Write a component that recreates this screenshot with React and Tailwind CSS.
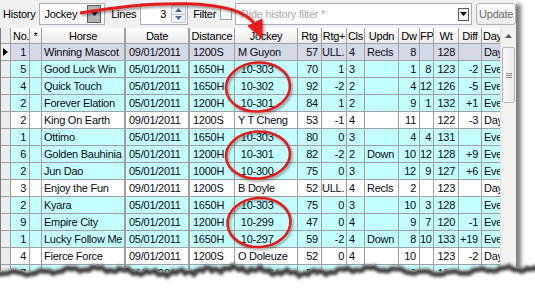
import React from 'react';

const ROWS = [
  { t: 'sel', no: '1', horse: 'Winning Mascot', date: '09/01/2011', dist: '1200S', jockey: 'M Guyon', rtg: '57', rtgp: 'ULL.', cls: '4', updn: 'Recls', dw: '8', fp: '', wt: '128', diff: '', day: 'Day' },
  { t: 'cyan', no: '5', horse: 'Good Luck Win', date: '05/01/2011', dist: '1650H', jockey: ' 10-303', rtg: '70', rtgp: '1', cls: '3', updn: '', dw: '1', fp: '8', wt: '123', diff: '-2', day: 'Eve' },
  { t: 'cyan', no: '4', horse: 'Quick Touch', date: '05/01/2011', dist: '1650H', jockey: ' 10-302', rtg: '92', rtgp: '-2', cls: '2', updn: '', dw: '4', fp: '12', wt: '126', diff: '-5', day: 'Eve' },
  { t: 'cyan', no: '2', horse: 'Forever Elation', date: '05/01/2011', dist: '1200H', jockey: ' 10-301', rtg: '84', rtgp: '1', cls: '2', updn: '', dw: '9', fp: '1', wt: '132', diff: '+1', day: 'Eve' },
  { t: 'white', no: '2', horse: 'King On Earth', date: '09/01/2011', dist: '1200S', jockey: 'Y T Cheng', rtg: '53', rtgp: '-1', cls: '4', updn: '', dw: '11', fp: '', wt: '122', diff: '-3', day: 'Day' },
  { t: 'cyan', no: '1', horse: 'Ottimo', date: '05/01/2011', dist: '1650H', jockey: ' 10-303', rtg: '80', rtgp: '0', cls: '3', updn: '', dw: '4', fp: '4', wt: '131', diff: '', day: 'Eve' },
  { t: 'cyan', no: '6', horse: 'Golden Bauhinia', date: '05/01/2011', dist: '1200H', jockey: ' 10-301', rtg: '82', rtgp: '-2', cls: '2', updn: 'Down', dw: '10', fp: '12', wt: '128', diff: '+9', day: 'Eve' },
  { t: 'cyan', no: '2', horse: 'Jun Dao', date: '05/01/2011', dist: '1000H', jockey: ' 10-300', rtg: '75', rtgp: '0', cls: '3', updn: '', dw: '12', fp: '9', wt: '127', diff: '+6', day: 'Eve' },
  { t: 'white', no: '3', horse: 'Enjoy the Fun', date: '09/01/2011', dist: '1200S', jockey: 'B Doyle', rtg: '52', rtgp: 'ULL.', cls: '4', updn: 'Recls', dw: '2', fp: '', wt: '123', diff: '', day: 'Day' },
  { t: 'cyan', no: '2', horse: 'Kyara', date: '05/01/2011', dist: '1650H', jockey: ' 10-303', rtg: '75', rtgp: '0', cls: '3', updn: '', dw: '10', fp: '3', wt: '128', diff: '', day: 'Eve' },
  { t: 'cyan', no: '9', horse: 'Empire City', date: '05/01/2011', dist: '1200H', jockey: ' 10-299', rtg: '47', rtgp: '0', cls: '4', updn: '', dw: '9', fp: '7', wt: '120', diff: '-1', day: 'Eve' },
  { t: 'cyan', no: '1', horse: 'Lucky Follow Me', date: '05/01/2011', dist: '1650H', jockey: ' 10-297', rtg: '59', rtgp: '-2', cls: '4', updn: 'Down', dw: '8', fp: '10', wt: '133', diff: '+19', day: 'Eve' },
  { t: 'white', no: '4', horse: 'Fierce Force', date: '09/01/2011', dist: '1200S', jockey: 'O Doleuze', rtg: '52', rtgp: '0', cls: '4', updn: '', dw: '10', fp: '', wt: '123', diff: '-2', day: 'Day' },
  { t: 'cyan', no: '7', horse: 'Sunny Way', date: '05/01/2011', dist: '1650H', jockey: ' 10-296', rtg: '58', rtgp: '0', cls: '4', updn: '', dw: '9', fp: '', wt: '126', diff: '', day: 'Eve' },
];

const COLS = [
  { k: 'no', label: 'No.', cell: 'text-right pr-[3px]', head: 'text-left pl-[2px]' },
  { k: 'star', label: '*', cell: '', head: 'text-center' },
  { k: 'horse', label: 'Horse', cell: 'pl-[2px] border-r-2', head: 'text-center border-r-2' },
  { k: 'date', label: 'Date', cell: 'pl-[3px] border-r-2', head: 'text-center border-r-2' },
  { k: 'dist', label: 'Distance', cell: 'pl-[3px]', head: 'text-center' },
  { k: 'jockey', label: 'Jockey', cell: 'pl-[3px]', head: 'text-center' },
  { k: 'rtg', label: 'Rtg', cell: 'text-right pr-[3px]', head: 'text-center' },
  { k: 'rtgp', label: 'Rtg+', cell: 'text-right pr-[2px]', head: 'text-center' },
  { k: 'cls', label: 'Cls', cell: 'pl-[2px]', head: 'text-center' },
  { k: 'updn', label: 'Updn', cell: 'pl-[2px]', head: 'text-center' },
  { k: 'dw', label: 'Dw', cell: 'text-right pr-[3px]', head: 'text-center' },
  { k: 'fp', label: 'FP', cell: 'text-right pr-[2px]', head: 'text-center' },
  { k: 'wt', label: 'Wt', cell: 'text-right pr-[3px]', head: 'text-center' },
  { k: 'diff', label: 'Diff', cell: 'text-right pr-[3px]', head: 'text-center' },
  { k: 'day', label: 'Day', cell: 'pl-[2px]', head: 'text-left pl-[1px]' },
];

const ROW_BG = { sel: 'bg-[#d5d9e7]', cyan: 'bg-[#c4ffff]', white: 'bg-white' };

const GRID = 'grid grid-cols-[10px_19px_12px_84px_64px_45px_63px_24px_25px_18px_34px_21px_14px_25px_23px_19px]';
const CELL = 'border-r border-b border-[#a0a0a0] overflow-hidden whitespace-pre leading-[16px]';

function DownArrow() {
  return (
    <svg width="7" height="4" viewBox="0 0 7 4">
      <path d="M0 0h7L3.5 4z" fill="#000" />
    </svg>
  );
}

function Toolbar() {
  return (
    <div className="h-[28px] flex items-center text-black">
      <span className="ml-[3px]">History</span>
      <div className="ml-[4px] w-[66px] h-[22px] border border-[#a9b0b8] bg-white flex items-center justify-between">
        <span className="pl-[4px]">Jockey</span>
        <div className="mr-[3px] w-[14px] h-[18px] bg-[#b4b4b4] border border-[#5c5c5c] flex items-center justify-center">
          <DownArrow />
        </div>
      </div>
      <span className="ml-[6px]">Lines</span>
      <div className="ml-[4px] w-[48px] h-[22px] border border-[#a9b0b8] bg-white flex items-center justify-end">
        <span className="mr-[5px]">3</span>
        <div className="mr-[1px] w-[15px] h-[18px] flex flex-col">
          <div className="flex-1 border border-[#b8c4d4] bg-[#eef2f8] flex items-center justify-center rounded-t-[2px]">
            <svg width="7" height="4" viewBox="0 0 7 4"><path d="M0 4h7L3.5 0z" fill="#4d6a92" /></svg>
          </div>
          <div className="flex-1 border border-t-0 border-[#b8c4d4] bg-[#eef2f8] flex items-center justify-center rounded-b-[2px]">
            <svg width="7" height="4" viewBox="0 0 7 4"><path d="M0 0h7L3.5 4z" fill="#4d6a92" /></svg>
          </div>
        </div>
      </div>
      <span className="ml-[5px]">Filter</span>
      <div className="ml-[4px] w-[12px] h-[12px] border border-[#9aa2ac] bg-white" />
      <div className="ml-[3px] w-[238px] h-[22px] border border-[#a9b0b8] bg-white flex items-center justify-between">
        <span className="pl-[5px] text-[#a8a8a8]">Ride history filter *</span>
        <div className="mr-[2px] w-[11px] h-[13px] border border-[#5c5c5c] bg-[#f4f4f4] flex items-center justify-center">
          <DownArrow />
        </div>
      </div>
      <div className="ml-[4px] w-[40px] h-[22px] border border-[#b2b2b2] rounded-[3px] bg-gradient-to-b from-[#fbfbfb] to-[#ececec] flex items-center justify-center text-[#6d6d6d]">
        Update
      </div>
    </div>
  );
}

function Scrollbar() {
  return (
    <div className="w-[16px] flex flex-col bg-[#f2f2ef] border-l border-[#e0e0e0]">
      <div className="h-[16px] flex items-center justify-center">
        <svg width="7" height="4" viewBox="0 0 7 4"><path d="M0 4h7L3.5 0z" fill="#555" /></svg>
      </div>
      <div className="mt-[3px] mx-[1px] h-[56px] rounded-[2px] border border-[#b5b5b5] bg-gradient-to-r from-[#f8f8f8] to-[#ebebeb] flex flex-col items-center justify-center gap-[1px]">
        <div className="w-[6px] h-[1px] bg-[#8a8a8a]" />
        <div className="w-[6px] h-[1px] bg-[#8a8a8a]" />
        <div className="w-[6px] h-[1px] bg-[#8a8a8a]" />
      </div>
    </div>
  );
}

function Grid() {
  return (
    <div className="w-[500px] flex flex-col border-l border-[#7c7c7c] bg-white">
      <div className={`${GRID} h-[16px]`}>
        <div className="border-r border-b border-[#a0a0a0] bg-[#ececec]" />
        {COLS.map((c) => (
          <div key={c.k} className={`${CELL} ${c.head} leading-[15px] bg-gradient-to-b from-[#fdfdfd] to-[#ececec]`}>
            {c.label}
          </div>
        ))}
      </div>
      {ROWS.map((r, i) => (
        <div key={i} className={`${GRID} h-[17px] text-[#0a0a14]`}>
          <div className="border-r border-b border-[#a0a0a0] bg-[#ececec] flex items-center pl-[2px]">
            {i === 0 && (
              <svg width="5" height="8" viewBox="0 0 5 8"><path d="M0 0l5 4-5 4z" fill="#000" /></svg>
            )}
          </div>
          {COLS.map((c) => (
            <div key={c.k} className={`${CELL} ${c.cell} ${ROW_BG[r.t]}`}>
              {c.k === 'star' ? '' : r[c.k]}
            </div>
          ))}
        </div>
      ))}
    </div>
  );
}

function tornEdge() {
  const pts = [];
  for (let x = -4; x <= 540; x += 3) {
    const y =
      268 +
      2.2 * Math.sin(x * 0.045 + 0.6) +
      1.6 * Math.sin(x * 0.23 + 1.3) +
      1.1 * Math.sin(x * 0.71 + 2.1) +
      0.7 * Math.sin(x * 1.37);
    pts.push([x, y]);
  }
  return pts;
}

function Overlay() {
  const edge = tornEdge();
  const top = edge.map(([x, y]) => `${x},${y.toFixed(1)}`).join(' ');
  const shadow = edge.map(([x, y], i) => `${i ? 'L' : 'M'}${x} ${(y + 3).toFixed(1)}`).join(' ');
  return (
    <svg className="absolute inset-0 pointer-events-none" width="535" height="294" viewBox="0 0 535 294">
      <defs>
        <filter id="soft" x="-10%" y="-50%" width="120%" height="200%">
          <feGaussianBlur stdDeviation="1.4" />
        </filter>
        <filter id="ds" x="-20%" y="-20%" width="140%" height="140%">
          <feDropShadow dx="1.5" dy="2" stdDeviation="1.3" floodColor="#000" floodOpacity="0.35" />
        </filter>
      </defs>
      <polygon points={`${top} 540,294 -4,294`} fill="#fff" />
      <path d={shadow} stroke="#3c3c3c" strokeWidth="5" fill="none" filter="url(#soft)" />
      <g filter="url(#ds)" stroke="#e31b1b" strokeWidth="2.6" fill="none">
        <path d="M80 13 C150 1, 234 -3, 254 23" strokeWidth="3" />
        <path d="M262 38 L248 26 L262 19 Z" fill="#e31b1b" strokeWidth="1" />
        <ellipse cx="258" cy="87" rx="32" ry="24.5" transform="rotate(-4 258 87)" />
        <ellipse cx="258" cy="155" rx="32" ry="23.5" transform="rotate(-4 258 155)" />
        <ellipse cx="259" cy="222.5" rx="31.5" ry="24.5" transform="rotate(-4 259 222.5)" />
      </g>
    </svg>
  );
}

export default function App() {
  return (
    <div className="relative w-[535px] h-[294px] bg-white overflow-hidden font-['Liberation_Sans',Arial,sans-serif] text-[11px] tracking-[-0.25px]">
      <div className="w-[516px] h-[286px] bg-[#f1f1f1] flex flex-col shadow-[5px_4px_4px_rgba(0,0,0,0.5)]">
        <Toolbar />
        <div className="flex flex-1 overflow-hidden">
          <Grid />
          <Scrollbar />
        </div>
      </div>
      <Overlay />
    </div>
  );
}
